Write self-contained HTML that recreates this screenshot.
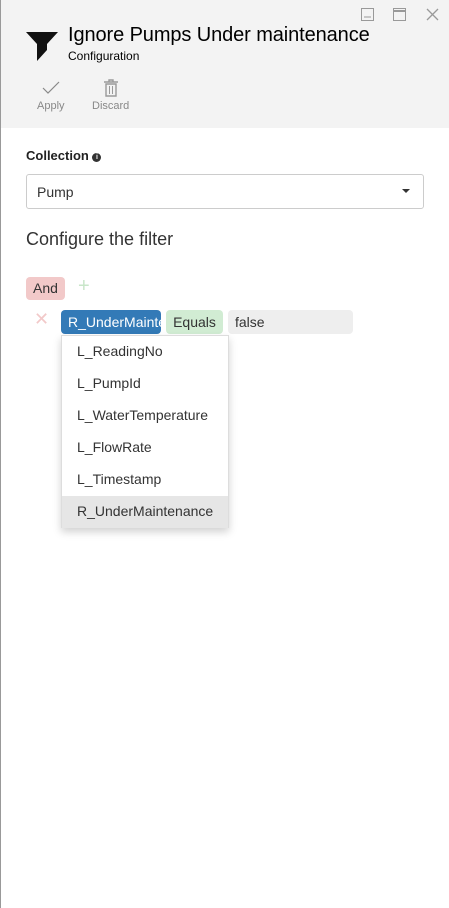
<!DOCTYPE html>
<html><head><style>
body{margin:0;width:449px;height:908px;background:#fff;font-family:"Liberation Sans",sans-serif;position:relative;overflow:hidden}
.lb{position:absolute;left:0;top:0;width:1px;height:908px;background:#999}
.hdr{position:absolute;left:1px;top:0;width:448px;height:128px;background:#f3f3f3}
.a{position:absolute}
.title{left:68px;top:24px;font-size:20px;color:#000;letter-spacing:-0.1px}
.sub{left:68px;top:49px;font-size:12px;color:#000}
.btnl{font-size:11px;color:#888}
.lbl{left:26px;top:148px;font-size:13px;font-weight:bold;color:#222}
.sel{left:26px;top:174px;width:398px;height:35px;border:1px solid #ccc;border-radius:3px;box-sizing:border-box;font-size:14px;color:#333;padding:9px 10px}
.cfg{left:26px;top:229px;font-size:18px;color:#333}
.and{left:26px;top:277px;width:39px;height:23px;background:#f2c9c9;border-radius:4px;font-size:14px;color:#333;text-align:center;line-height:23px}
.field{left:61px;top:310px;width:100px;height:24px;background:#337ab7;border-radius:4px;color:#fff;font-size:14px;line-height:24px;padding-left:7px;box-sizing:border-box;overflow:hidden;white-space:nowrap}
.eq{left:166px;top:310px;width:57px;height:24px;background:#d1ecd3;border-radius:4px;font-size:14px;line-height:24px;text-align:center;color:#333}
.val{left:228px;top:310px;width:125px;height:24px;background:#eee;border-radius:4px;font-size:14px;line-height:24px;padding-left:7px;box-sizing:border-box;color:#333}
.dd{left:61px;top:335px;width:168px;height:193px;background:#fff;border:1px solid #ddd;box-shadow:0 4px 8px rgba(0,0,0,.18);box-sizing:border-box;padding-top:0}
.dd div{height:32px;line-height:30px;padding-left:15px;font-size:14px;color:#333}
.dd div:last-child{line-height:30px}
</style></head><body>
<div class="hdr"></div><div class="lb"></div>
<svg class="a" style="left:360px;top:7px" width="80" height="16">
<rect x="1.5" y="1.5" width="12" height="12" fill="none" stroke="#999"/><line x1="4" y1="10" x2="11" y2="10" stroke="#999"/>
<rect x="33.5" y="1.5" width="12" height="12" fill="none" stroke="#999"/><line x1="34" y1="4" x2="45" y2="4" stroke="#999" stroke-width="2"/>
<path d="M67 2L78 13M78 2L67 13" stroke="#999" stroke-width="1.3"/></svg>
<svg class="a" style="left:25px;top:31px" width="34" height="30"><path d="M1 1H33L22 13H12Z M12 13H22V19L12 30Z" fill="#111"/></svg>
<div class="a title">Ignore Pumps Under maintenance</div>
<div class="a sub">Configuration</div>
<svg class="a" style="left:42px;top:81px" width="18" height="14"><path d="M1 7L6 12L17 1" stroke="#888" stroke-width="1.2" fill="none"/></svg>
<div class="a btnl" style="left:37px;top:100px">Apply</div>
<svg class="a" style="left:103px;top:79px" width="16" height="18"><path d="M1 3H15M6 3V1H10V3M3 5H13V17H3Z" stroke="#999" stroke-width="1.4" fill="none"/><path d="M6.5 7V15M9.5 7V15" stroke="#999"/></svg>
<div class="a btnl" style="left:92px;top:100px">Discard</div>
<div class="a lbl">Collection <span style="display:inline-block;width:9px;height:9px;border-radius:50%;background:#333;color:#fff;font-size:7px;text-align:center;line-height:9px;vertical-align:1px">i</span></div>
<div class="a sel">Pump</div>
<div class="a" style="left:402px;top:189px;width:0;height:0;border-left:4px solid transparent;border-right:4px solid transparent;border-top:4px solid #333"></div>
<div class="a cfg">Configure the filter</div>
<div class="a and">And</div>
<div class="a" style="left:78px;top:275px;font-size:20px;color:#c8e6c9">+</div>
<div class="a" style="left:34px;top:309px;font-size:18px;color:#f2c9c9">✕</div>
<div class="a field">R_UnderMaintenance</div>
<div class="a eq">Equals</div>
<div class="a val">false</div>
<div class="a dd"><div>L_ReadingNo</div><div>L_PumpId</div><div>L_WaterTemperature</div><div>L_FlowRate</div><div>L_Timestamp</div><div style="background:#e6e6e6">R_UnderMaintenance</div></div>
</body></html>
